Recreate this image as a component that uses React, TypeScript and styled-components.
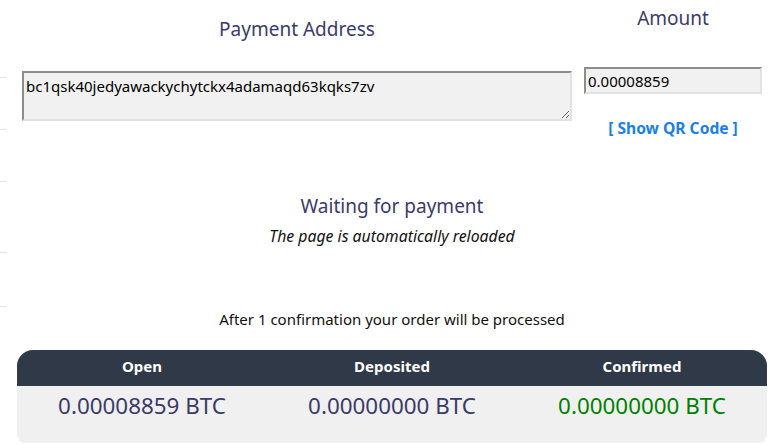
import React from "react";
import styled, { createGlobalStyle } from "styled-components";

const Global = createGlobalStyle`
  html, body { margin: 0; padding: 0; background: #ffffff; }
  * { box-sizing: border-box; }
`;

const Page = styled.div`
  display: flex;
  width: 777px;
  height: 445px;
  overflow: hidden;
  font-family: "Noto Sans", "Open Sans", sans-serif;
  color: #111;
`;

const Sidebar = styled.div`
  width: 7px;
  flex: none;
  display: flex;
  flex-direction: column;
`;

const SideItem = styled.div<{ $h: number }>`
  height: ${(p) => p.$h}px;
  border-bottom: 1px solid #e2e2e2;
`;

const Main = styled.main`
  flex: 1;
  padding: 0 10px 0 10px;
  display: flex;
  flex-direction: column;
`;

const Top = styled.section`
  display: flex;
  gap: 12px;
  padding-left: 5px;
`;

const AddressCol = styled.div`
  width: 550px;
  display: flex;
  flex-direction: column;
  align-items: center;
`;

const AmountCol = styled.div`
  width: 178px;
  display: flex;
  flex-direction: column;
  align-items: center;
`;

const Title = styled.h2<{ $top: number; $gap: number }>`
  margin: ${(p) => p.$top}px 0 ${(p) => p.$gap}px;
  font-size: 19px;
  font-weight: 400;
  line-height: 24px;
  color: #3b3a6a;
`;

const AddressBox = styled.textarea`
  width: 550px;
  height: 50px;
  resize: both;
  background: #f1f1f1;
  border: 2px solid;
  border-color: #8d8d8d #e2e2e2 #e2e2e2 #8d8d8d;
  font-family: "Noto Sans", sans-serif;
  font-size: 15px;
  line-height: 20px;
  padding: 3px 2px;
  color: #000;
  outline: none;
`;

const AmountBox = styled.input`
  width: 178px;
  height: 27px;
  background: #f1f1f1;
  border: 2px solid;
  border-color: #8d8d8d #e2e2e2 #e2e2e2 #8d8d8d;
  font-family: "Noto Sans", sans-serif;
  font-size: 15px;
  padding: 0 2px;
  color: #000;
  outline: none;
`;

const QrLink = styled.a`
  margin-top: 24px;
  font-size: 15.6px;
  font-weight: 700;
  color: #1a7fe6;
  text-decoration: none;
  line-height: 20px;
  cursor: pointer;
`;

const Status = styled.section`
  margin-top: 56px;
  display: flex;
  flex-direction: column;
  align-items: center;
`;

const StatusTitle = styled.div`
  font-size: 19px;
  line-height: 24px;
  color: #3b3a6a;
`;

const Note = styled.div`
  margin-top: 8px;
  font-size: 15.8px;
  font-style: italic;
  line-height: 20px;
  color: #111;
`;

const Info = styled.div`
  margin-top: 63px;
  text-align: center;
  font-size: 15px;
  line-height: 20px;
  color: #111;
`;

const Table = styled.div`
  margin-top: 21px;
  display: grid;
  grid-template-columns: repeat(3, 1fr);
  border-radius: 16px 16px 8px 8px;
  overflow: hidden;
  background: #f0f0f0;
`;

const HeadCell = styled.div`
  background: #2f3948;
  color: #fff;
  font-weight: 700;
  font-size: 15px;
  height: 36px;
  padding-bottom: 4px;
  display: flex;
  align-items: center;
  justify-content: center;
`;

const ValueCell = styled.div<{ $color: string }>`
  height: 57px;
  padding-top: 6px;
  text-align: center;
  font-size: 22.4px;
  line-height: 28px;
  color: ${(p) => p.$color};
`;

export default function App() {
  return (
    <Page>
      <Global />
      <Sidebar>
        <SideItem $h={78} />
        <SideItem $h={52} />
        <SideItem $h={52} />
        <SideItem $h={71} />
        <SideItem $h={54} />
      </Sidebar>
      <Main>
        <Top>
          <AddressCol>
            <Title $top={17} $gap={30}>Payment Address</Title>
            <AddressBox defaultValue="bc1qsk40jedyawackychytckx4adamaqd63kqks7zv" readOnly />
          </AddressCol>
          <AmountCol>
            <Title $top={6} $gap={37}>Amount</Title>
            <AmountBox defaultValue="0.00008859" readOnly />
            <QrLink>[ Show QR Code ]</QrLink>
          </AmountCol>
        </Top>
        <Status>
          <StatusTitle>Waiting for payment</StatusTitle>
          <Note>The page is automatically reloaded</Note>
        </Status>
        <Info>After 1 confirmation your order will be processed</Info>
        <Table>
          <HeadCell>Open</HeadCell>
          <HeadCell>Deposited</HeadCell>
          <HeadCell>Confirmed</HeadCell>
          <ValueCell $color="#3b3a6a">0.00008859 BTC</ValueCell>
          <ValueCell $color="#3b3a6a">0.00000000 BTC</ValueCell>
          <ValueCell $color="#008000">0.00000000 BTC</ValueCell>
        </Table>
      </Main>
    </Page>
  );
}
